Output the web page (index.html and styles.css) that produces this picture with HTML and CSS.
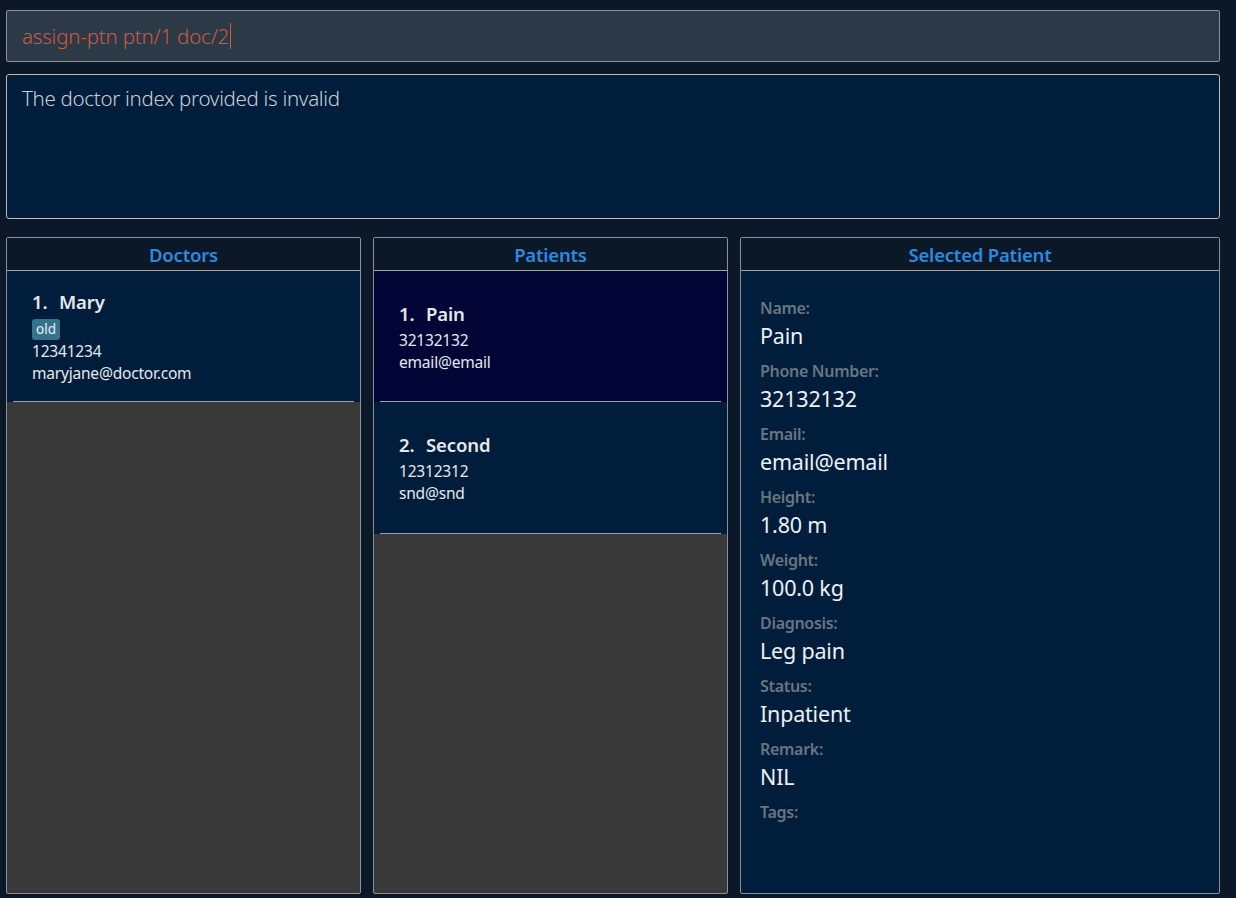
FILE: index.html
```html
<!DOCTYPE html>
<html>
<head>
<meta charset="utf-8">
<link rel="stylesheet" href="styles.css">
</head>
<body>
<div class="app">
  <div class="command"><span class="cmd-text">assign-ptn ptn/1 doc/2</span><span class="caret"></span></div>
  <div class="result">The doctor index provided is invalid</div>
  <div class="panels">
    <section class="panel doctors">
      <div class="panel-title">Doctors</div>
      <div class="list">
        <div class="card">
          <div class="card-name">1.&nbsp; Mary</div>
          <div class="tags"><span class="tag">old</span></div>
          <div class="card-line">12341234</div>
          <div class="card-line">maryjane@doctor.com</div>
        </div>
      </div>
    </section>
    <section class="panel patients">
      <div class="panel-title">Patients</div>
      <div class="list">
        <div class="card pcard selected">
          <div class="card-name">1.&nbsp; Pain</div>
          <div class="card-line">32132132</div>
          <div class="card-line">email@email</div>
        </div>
        <div class="card pcard">
          <div class="card-name">2.&nbsp; Second</div>
          <div class="card-line">12312312</div>
          <div class="card-line">snd@snd</div>
        </div>
      </div>
    </section>
    <section class="panel selected-panel">
      <div class="panel-title">Selected Patient</div>
      <div class="details">
        <div class="field"><div class="label">Name:</div><div class="value">Pain</div></div>
        <div class="field"><div class="label">Phone Number:</div><div class="value">32132132</div></div>
        <div class="field"><div class="label">Email:</div><div class="value">email@email</div></div>
        <div class="field"><div class="label">Height:</div><div class="value">1.80 m</div></div>
        <div class="field"><div class="label">Weight:</div><div class="value">100.0 kg</div></div>
        <div class="field"><div class="label">Diagnosis:</div><div class="value">Leg pain</div></div>
        <div class="field"><div class="label">Status:</div><div class="value">Inpatient</div></div>
        <div class="field"><div class="label">Remark:</div><div class="value">NIL</div></div>
        <div class="field"><div class="label">Tags:</div></div>
      </div>
    </section>
  </div>
</div>
</body>
</html>
```
FILE: styles.css
```css
html, body {
  margin: 0;
  padding: 0;
  background: #0b1827;
  font-family: "Noto Sans", "Open Sans", sans-serif;
}
.app {
  width: 1236px;
  height: 898px;
  padding: 10px 16px 0 6px;
  box-sizing: border-box;
  display: flex;
  flex-direction: column;
}
.command {
  height: 52px;
  box-sizing: border-box;
  background: #2c3947;
  border: 1px solid #8b9299;
  border-radius: 2px;
  display: flex;
  align-items: center;
  padding-left: 15px;
}
.cmd-text {
  color: #d5573d;
  font-size: 20.5px;
  font-weight: 300;
  letter-spacing: -0.2px;
}
.caret {
  display: inline-block;
  width: 1px;
  height: 26px;
  background: #d5573d;
  margin-left: 1px;
}
.result {
  margin-top: 12px;
  height: 145px;
  box-sizing: border-box;
  background: #001e3c;
  border: 1px solid #b9bec4;
  border-radius: 3px;
  color: #c9cfd6;
  font-size: 20.5px;
  font-weight: 300;
  line-height: 26px;
  letter-spacing: -0.3px;
  padding: 10px 15px;
}
.panels {
  margin-top: 18px;
  display: grid;
  grid-template-columns: 355px 355px 1fr;
  column-gap: 12px;
  height: 657px;
}
.panel {
  border: 1px solid #8b9096;
  border-radius: 2px;
  display: flex;
  flex-direction: column;
  overflow: hidden;
  background: #393939;
}
.panel-title {
  height: 32px;
  flex: none;
  background: #0b1827;
  border-bottom: 1px solid #a0a4a8;
  color: #2a8ae0;
  font-weight: 600;
  font-size: 18.5px;
  display: flex;
  align-items: center;
  justify-content: center;
  letter-spacing: -0.2px;
}
.list {
  display: flex;
  flex-direction: column;
}
.card {
  height: 131px;
  box-sizing: border-box;
  background: #001e3c;
  padding: 17px 25px 0;
  position: relative;
  color: #e6e9ec;
}
.card::after {
  content: "";
  position: absolute;
  left: 6px;
  right: 6px;
  bottom: 0;
  height: 1px;
  background: #9aa0a6;
}
.pcard {
  padding-top: 29px;
}
.pcard + .pcard {
  height: 132px;
}
.selected {
  background: #000535;
}
.card-name {
  font-size: 18.5px;
  font-weight: 600;
  line-height: 28px;
  letter-spacing: -0.1px;
  margin-bottom: 1px;
  word-spacing: 1px;
}
.card-line {
  font-size: 15.5px;
  line-height: 22px;
  letter-spacing: -0.2px;
}
.tags {
  display: flex;
  margin: 3px 0 0;
}
.tag {
  display: block;
  height: 21px;
  box-sizing: border-box;
  background: #35728b;
  color: #e8eef2;
  font-size: 13.5px;
  line-height: 21px;
  padding: 0 4px;
  border-radius: 3px;
}
.selected-panel {
  background: #001e3c;
}
.details {
  padding: 25px 19px 0;
  display: flex;
  flex-direction: column;
}
.field {
  display: flex;
  flex-direction: column;
}
.label {
  color: #6b7580;
  font-size: 16px;
  font-weight: 600;
  line-height: 24px;
  letter-spacing: -0.3px;
}
.value {
  color: #eef1f4;
  font-size: 21.5px;
  line-height: 32px;
  margin-bottom: 7px;
  letter-spacing: -0.2px;
}
```
